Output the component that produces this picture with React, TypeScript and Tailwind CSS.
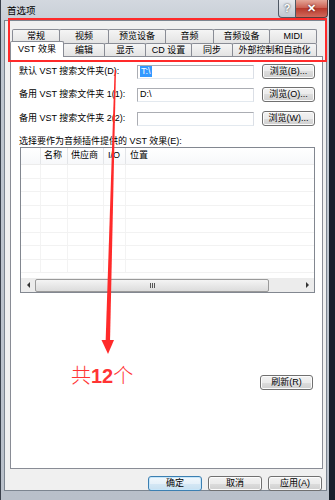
const font = "font-['Liberation_Sans','Noto_Sans_CJK_SC',sans-serif]";

const backTabs = [
  { label: "常规", w: "w-[48px]" },
  { label: "视频", w: "w-[50px]" },
  { label: "预览设备", w: "w-[58px]" },
  { label: "音频", w: "w-[49px]" },
  { label: "音频设备", w: "w-[57px]" },
  { label: "MIDI", w: "w-[48px]" },
];

const frontTabs = [
  { label: "编辑", w: "w-[42px]" },
  { label: "显示", w: "w-[42px]" },
  { label: "CD 设置", w: "w-[47px]" },
  { label: "同步", w: "w-[42px]" },
  { label: "外部控制和自动化", w: "w-[85px]" },
];

const folders = [
  { label: "默认 VST 搜索文件夹(D):", value: "T:\\", selected: true, btn: "浏览(B)...", gap: "mt-0" },
  { label: "备用 VST 搜索文件夹 1(1):", value: "D:\\", selected: false, btn: "浏览(O)...", gap: "mt-[8px]" },
  { label: "备用 VST 搜索文件夹 2(2):", value: "", selected: false, btn: "浏览(W)...", gap: "mt-[9px]" },
];

function Btn({ children, w, focus }: { children: React.ReactNode; w: string; focus?: boolean }) {
  return (
    <div
      className={`${w} h-[15px] shrink-0 flex items-center justify-center rounded-[3px] border text-[9px] leading-none text-black ${
        focus
          ? "border-[#3c7fb1] bg-[linear-gradient(#f1f8fd_0%,#e6f1f9_50%,#d5e8f5_50%,#c8e0f0_100%)] shadow-[inset_0_0_0_1px_#c6e6fa]"
          : "border-[#707070] bg-[linear-gradient(#f2f2f2_0%,#ebebeb_50%,#dddddd_50%,#cfcfcf_100%)] shadow-[inset_0_0_0_1px_#fcfcfc]"
      }`}
    >
      {children}
    </div>
  );
}

function ListBox() {
  const rows = Array.from({ length: 8 });
  return (
    <div className="ml-[1px] w-[295px] h-[146px] border border-[#828790] bg-white flex flex-col">
      <div className="h-[17px] flex items-stretch border-b border-[#ececec] bg-[linear-gradient(#ffffff,#f7f8fa)] text-[9px] text-black">
        <div className="w-[20px] border-r border-[#e3e5e8]" />
        <div className="w-[27px] border-r border-[#e3e5e8] flex items-center pl-[3px]">名称</div>
        <div className="w-[36px] border-r border-[#e3e5e8] flex items-center pl-[3px]">供应商</div>
        <div className="w-[22px] border-r border-[#e3e5e8] flex items-center pl-[4px]">I/O</div>
        <div className="flex-1 flex items-center pl-[4px]">位置</div>
      </div>
      <div className="flex-1 flex flex-col overflow-hidden">
        {rows.map((_, i) => (
          <div key={i} className="h-[13.5px] shrink-0 flex border-b border-[#f2f2f2]">
            <div className="w-[20px] border-r border-[#f3f3f3]" />
            <div className="w-[27px] border-r border-[#f3f3f3]" />
            <div className="w-[36px] border-r border-[#f3f3f3]" />
            <div className="w-[22px] border-r border-[#f3f3f3]" />
            <div className="flex-1" />
          </div>
        ))}
      </div>
      <div className="h-[14px] shrink-0 flex items-center bg-[#ececec]">
        <div className="w-[14px] h-full flex items-center justify-center">
          <div className="w-0 h-0 border-y-[3px] border-y-transparent border-r-[3px] border-r-[#333]" />
        </div>
        <div className="w-[234px] h-[13px] rounded-[2px] border border-[#9a9a9a] bg-[linear-gradient(#f4f4f4,#dcdcdc)] flex items-center justify-center gap-[1px]">
          <div className="w-px h-[5px] bg-[#555]" />
          <div className="w-px h-[5px] bg-[#555]" />
          <div className="w-px h-[5px] bg-[#555]" />
        </div>
        <div className="flex-1" />
        <div className="w-[14px] h-full flex items-center justify-center">
          <div className="w-0 h-0 border-y-[3px] border-y-transparent border-l-[3px] border-l-[#333]" />
        </div>
      </div>
    </div>
  );
}

export default function App() {
  return (
    <div className={`relative w-[335px] h-[500px] overflow-hidden bg-[#18202c] ${font}`}>
      <div className="w-[329px] h-[500px] flex flex-col bg-[linear-gradient(#d3d8df,#bfc6cf_40px,#b9c0ca)] border-l border-[#3a414c]">
        {/* title bar */}
        <div className="h-[20px] shrink-0 flex items-start">
          <div className="pl-[6px] pt-[6px] text-[9.5px] leading-none text-black">首选项</div>
          <div className="ml-auto flex pr-[1px]">
            <div className="w-[18px] h-[18px] rounded-bl-[4px] border border-t-0 border-[#4f5864] bg-[linear-gradient(#e6e9ee,#c0c7d0)] flex items-center justify-center text-[11px] font-bold text-white [text-shadow:0_0_2px_#222]">
              ?
            </div>
            <div className="w-[32px] h-[18px] rounded-br-[4px] border border-t-0 border-l-0 border-[#5b3a3a] bg-[linear-gradient(#e4a597,#c95a4c_50%,#b93a2d_50%,#d0695b)] flex items-center justify-center text-[11px] font-bold text-white [text-shadow:0_0_2px_#400]">
              ✕
            </div>
          </div>
        </div>

        {/* client area */}
        <div className="ml-[3px] w-[323px] h-[471px] shrink-0 bg-[#f0f0f0] flex flex-col pl-[5px] pr-[4px] pt-[8px] border border-[#7c8590]">
          <div className="h-[14px] flex pl-[2px]">
            {backTabs.map((t) => (
              <div
                key={t.label}
                className={`${t.w} h-[14px] -mr-px border border-b-0 border-[#898c95] rounded-t-[2px] bg-[linear-gradient(#f5f5f5,#e3e3e3)] flex items-center justify-center text-[9px] leading-none text-black`}
              >
                {t.label}
              </div>
            ))}
          </div>
          <div className="h-[13px] flex items-end">
            <div className="relative top-[1px] z-10 w-[54px] h-[16px] border border-b-0 border-[#898c95] rounded-t-[2px] bg-white flex items-center justify-center text-[9px] leading-none text-black">
              VST 效果
            </div>
            {frontTabs.map((t) => (
              <div
                key={t.label}
                className={`${t.w} h-[13px] -ml-px border border-b-0 border-[#898c95] rounded-t-[2px] bg-[linear-gradient(#f5f5f5,#e3e3e3)] flex items-center justify-center text-[9px] leading-none text-black`}
              >
                {t.label}
              </div>
            ))}
          </div>

          {/* tab page */}
          <div className="w-[313px] h-[413px] shrink-0 border border-[#898c95] bg-white flex flex-col pl-[8px] pt-[7px]">
            {folders.map((f) => (
              <div key={f.label} className={`${f.gap} h-[15px] flex items-center`}>
                <div className="w-[118px] text-[9px] leading-none text-black whitespace-nowrap">{f.label}</div>
                <div className="w-[117px] h-[14px] border border-[#abadb3] border-b-[#e3e9ef] border-r-[#dbdfe6] bg-white flex items-center pl-[2px] text-[9px] leading-none text-black">
                  {f.selected ? <span className="bg-[#3399ff] text-white px-[1px] py-[1px]">{f.value}</span> : f.value}
                </div>
                <div className="ml-[8px]">
                  <Btn w="w-[53px]">{f.btn}</Btn>
                </div>
              </div>
            ))}

            <div className="mt-[9px] h-[12px] text-[9px] leading-[12px] text-black">选择要作为音频插件提供的 VST 效果(E):</div>
            <ListBox />

            <div className="mt-[82px] ml-[241px]">
              <Btn w="w-[53px]">刷新(R)</Btn>
            </div>
          </div>

          <div className="mt-[7px] flex justify-end gap-[6px]">
            <Btn w="w-[54px]" focus>确定</Btn>
            <Btn w="w-[54px]">取消</Btn>
            <Btn w="w-[54px]">应用(A)</Btn>
          </div>
        </div>
      </div>

      {/* annotations */}
      <div className="absolute left-[8px] top-[18px] w-[319px] h-[44px] border-2 border-[#ff2a2a] pointer-events-none" />
      <svg className="absolute left-0 top-0 pointer-events-none" width="335" height="500" viewBox="0 0 335 500">
        <polygon points="114.6,70 116,70 110,342 105.6,342" fill="#ff2a2a" />
        <polygon points="101.5,340 114,340 108,354" fill="#ff2a2a" />
      </svg>
      <div className="absolute left-[71px] top-[362px] text-[20px] leading-[26px] text-[#ff3434] font-['Noto_Sans_CJK_SC',sans-serif]">
        <span className="font-light">共</span>
        <span className="font-bold font-['Liberation_Sans',sans-serif]">12</span>
        <span className="font-light">个</span>
      </div>
    </div>
  );
}
